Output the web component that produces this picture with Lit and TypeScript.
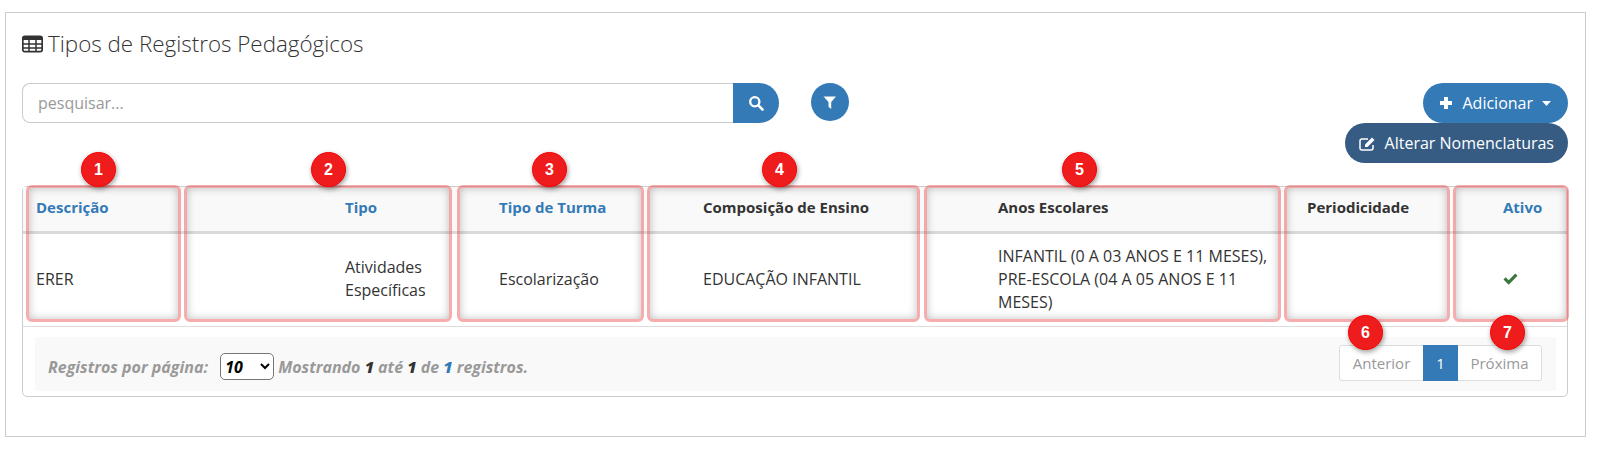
import { LitElement, html, css, svg } from 'lit';
import { customElement } from 'lit/decorators.js';

// overlay annotations, coordinates are relative to the page
const boxes = [
  [26, 155],
  [184, 268],
  [457, 187],
  [647, 273],
  [924, 357],
  [1284, 166],
  [1453, 116],
];

const badges = [
  [1, 98, 169],
  [2, 328, 169],
  [3, 549, 169],
  [4, 779, 169],
  [5, 1079, 169],
  [6, 1365, 332],
  [7, 1507, 332],
];

const icon = (w: number, h: number, body: unknown) => html`
  <svg width=${w} height=${h} viewBox="0 0 ${w} ${h}">${body}</svg>
`;

@customElement('app-root')
export class AppRoot extends LitElement {
  static styles = css`
    :host {
      display: block;
      font-family: 'Open Sans', sans-serif;
      font-size: 16px;
      color: #333;
      position: relative;
      height: 460px;
      overflow: hidden;
    }
    .panel {
      position: absolute;
      left: 5px;
      top: 12px;
      width: 1581px;
      height: 425px;
      box-sizing: border-box;
      border: 1px solid #ccc;
      padding: 0 17px 0 16px;
    }
    .title {
      display: flex;
      align-items: center;
      gap: 5px;
      height: 61px;
      margin: 0;
      font-size: 22.4px;
      font-weight: 300;
      color: #333;
    }
    .toolbar {
      display: flex;
      justify-content: space-between;
      height: 103px;
      margin-top: 9px;
    }
    .search-group {
      display: flex;
      align-items: flex-start;
    }
    .search {
      width: 711px;
      height: 40px;
      box-sizing: border-box;
      border: 1px solid #ccc;
      border-right: 0;
      border-radius: 8px 0 0 8px;
      padding: 0 15px;
      font-size: 16px;
      color: #999;
      display: flex;
      align-items: center;
    }
    .search-btn {
      width: 46px;
      height: 40px;
      background: #337ab7;
      border-radius: 0 20px 20px 0;
      display: flex;
      align-items: center;
      justify-content: center;
    }
    .filter-btn {
      width: 38px;
      height: 38px;
      margin-left: 32px;
      background: #337ab7;
      border-radius: 50%;
      display: flex;
      align-items: center;
      justify-content: center;
    }
    .actions {
      display: flex;
      flex-direction: column;
      align-items: flex-end;
    }
    .btn {
      height: 40px;
      box-sizing: border-box;
      border-radius: 20px;
      background: #337ab7;
      color: #fff;
      display: flex;
      align-items: center;
      font-size: 16px;
      padding: 0 17px 0 16px;
      gap: 9px;
    }
    .btn.dark {
      background: #365c84;
      padding: 0 14px;
    }
    .card {
      border: 1px solid #ccc;
      border-radius: 5px;
      height: 211px;
      box-sizing: border-box;
    }
    table {
      border-collapse: collapse;
      table-layout: fixed;
      width: 1544px;
    }
    th,
    td {
      text-align: left;
      vertical-align: middle;
      line-height: 23px;
      padding-top: 0;
      padding-right: 0;
      padding-bottom: 0;
    }
    th {
      height: 41px;
      padding-bottom: 3px;
      background: #f9f9f9;
      border-bottom: 3px solid #d9d9d9;
      font-size: 15px;
      font-weight: 700;
    }
    td {
      height: 90px;
      padding-bottom: 2px;
      border-bottom: 1px solid #ddd;
    }
    .sortable {
      color: #337ab7;
    }
    .c1 { padding-left: 13px; }
    .c2 { padding-left: 162px; }
    .c3 { padding-left: 44px; }
    .c4 { padding-left: 58px; }
    .c5 { padding-left: 76px; }
    .c6 { padding-left: 25px; }
    .c7 { padding-left: 52px; }
    .check {
      display: block;
    }
    .footer {
      margin: 10px 11px 0 12px;
      height: 54px;
      background: #f9f9f9;
      display: flex;
      justify-content: space-between;
      padding: 0 14px 0 13px;
      color: #999;
      font-weight: 700;
      font-style: italic;
    }
    .info {
      display: flex;
      align-items: center;
      white-space: pre;
      padding-top: 5px;
      height: 49px;
    }
    .info b {
      color: #333;
    }
    .info b.link {
      color: #337ab7;
    }
    select {
      font: italic 700 16px 'Open Sans', sans-serif;
      color: #000;
      background: #fff;
      width: 54px;
      height: 27px;
      margin: 0 4px 0 8px;
      border: 1px solid #767676;
      border-radius: 5px;
    }
    .pager {
      display: flex;
      height: 36px;
      margin-top: 8px;
      box-sizing: border-box;
      border: 1px solid #ddd;
      border-radius: 3px;
      background: #fff;
      font-size: 15px;
      font-style: normal;
      font-weight: 400;
      color: #999;
    }
    .pager span {
      display: flex;
      align-items: center;
      justify-content: center;
      width: 83px;
    }
    .pager .current {
      width: 35px;
      margin: -1px 0;
      background: #337ab7;
      color: #fff;
    }
    .highlight {
      position: absolute;
      top: 185px;
      height: 137px;
      box-sizing: border-box;
      border: 3px solid rgba(232, 60, 60, 0.42);
      border-radius: 6px;
      box-shadow: inset 0 0 9px rgba(0, 0, 0, 0.25);
      pointer-events: none;
    }
    .badge {
      position: absolute;
      width: 35px;
      height: 35px;
      box-sizing: border-box;
      margin: -17px 0 0 -17px;
      border-radius: 50%;
      background: #ee1c1c;
      border: 1px solid #ff0000;
      box-shadow: 1px 2px 5px rgba(0, 0, 0, 0.4);
      color: #fff;
      font: 700 16px 'Liberation Sans', sans-serif;
      display: flex;
      align-items: center;
      justify-content: center;
    }
  `;

  render() {
    return html`
      <div class="panel">
        <h2 class="title">
          ${icon(21, 18, svg`
            <rect x="0.8" y="1.3" width="19.4" height="15.4" rx="2" fill="none" stroke="#333" stroke-width="1.7" />
            <rect x="1" y="1" width="19" height="4" fill="#333" />
            <path d="M1 9h19M1 13h19M7 4v13M14 4v13" stroke="#333" stroke-width="1.5" fill="none" />
          `)}
          Tipos de Registros Pedagógicos
        </h2>

        <div class="toolbar">
          <div class="search-group">
            <div class="search">pesquisar...</div>
            <div class="search-btn">
              ${icon(16, 16, svg`
                <circle cx="6.8" cy="6.8" r="4.6" fill="none" stroke="#fff" stroke-width="2.3" />
                <path d="M10.4 10.4L14.5 14.5" stroke="#fff" stroke-width="2.6" stroke-linecap="round" />
              `)}
            </div>
            <div class="filter-btn">
              ${icon(14, 13, svg`<path d="M0.5 0.5h12.5L8.2 6v7L5.5 10.8V6z" fill="#fff" />`)}
            </div>
          </div>
          <div class="actions">
            <div class="btn">
              ${icon(14, 14, svg`<path d="M5 1h4v4h4v4H9v4H5V9H1V5h4z" fill="#fff" />`)}
              Adicionar
              ${icon(9, 5, svg`<path d="M0 0h9L4.5 5z" fill="#fff" />`)}
            </div>
            <div class="btn dark">
              ${icon(17, 15, svg`
                <path d="M14 9v3a2 2 0 0 1-2 2H3a2 2 0 0 1-2-2V5a2 2 0 0 1 2-2h6" fill="none" stroke="#fff" stroke-width="1.5" />
                <path d="M6 8.5L13 1.5l2.5 2.5-7 7H6z" fill="#fff" />
              `)}
              Alterar Nomenclaturas
            </div>
          </div>
        </div>

        <div class="card">
          <table>
            <colgroup>
              <col style="width:160px" /><col style="width:272px" /><col style="width:190px" />
              <col style="width:277px" /><col style="width:360px" /><col style="width:169px" /><col style="width:116px" />
            </colgroup>
            <thead>
              <tr>
                <th class="c1 sortable">Descrição</th>
                <th class="c2 sortable">Tipo</th>
                <th class="c3 sortable">Tipo de Turma</th>
                <th class="c4">Composição de Ensino</th>
                <th class="c5">Anos Escolares</th>
                <th class="c6">Periodicidade</th>
                <th class="c7 sortable">Ativo</th>
              </tr>
            </thead>
            <tbody>
              <tr>
                <td class="c1">ERER</td>
                <td class="c2">Atividades Específicas</td>
                <td class="c3">Escolarização</td>
                <td class="c4">EDUCAÇÃO INFANTIL</td>
                <td class="c5">INFANTIL (0 A 03 ANOS E 11 MESES), PRE-ESCOLA (04 A 05 ANOS E 11 MESES)</td>
                <td class="c6"></td>
                <td class="c7">
                  <svg class="check" width="15" height="12" viewBox="0 0 15 12">
                    <path d="M0.5 6.5l2.2-2.2 3 3 6.6-6.8 2.2 2.2-8.8 9z" fill="#3c763d" />
                  </svg>
                </td>
              </tr>
            </tbody>
          </table>

          <div class="footer">
            <div class="info">Registros por página: <select><option>10</option></select>Mostrando <b>1</b> até <b>1</b> de <b class="link">1</b> registros.</div>
            <div class="pager">
              <span>Anterior</span>
              <span class="current">1</span>
              <span>Próxima</span>
            </div>
          </div>
        </div>
      </div>

      ${boxes.map(
        ([left, width]) =>
          html`<div class="highlight" style="left:${left}px;width:${width}px"></div>`,
      )}
      ${badges.map(
        ([n, x, y]) => html`<div class="badge" style="left:${x}px;top:${y}px">${n}</div>`,
      )}
    `;
  }
}
